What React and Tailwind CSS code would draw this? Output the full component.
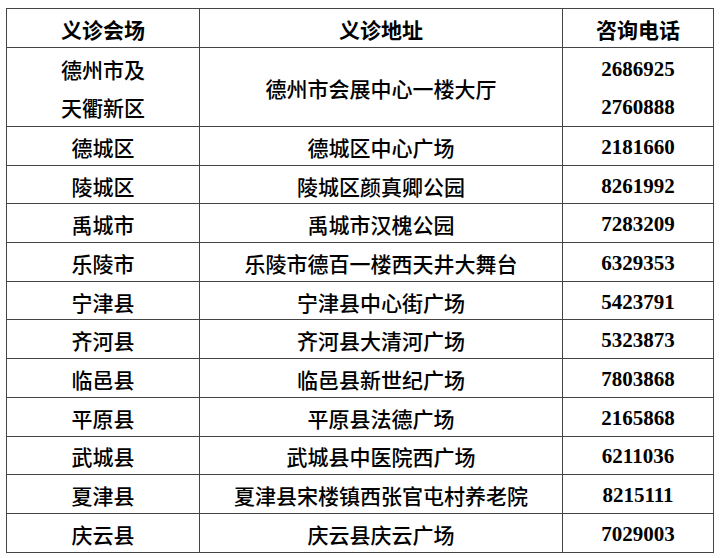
import React from "react";

const rows = [
  ["德城区", "德城区中心广场", "2181660"],
  ["陵城区", "陵城区颜真卿公园", "8261992"],
  ["禹城市", "禹城市汉槐公园", "7283209"],
  ["乐陵市", "乐陵市德百一楼西天井大舞台", "6329353"],
  ["宁津县", "宁津县中心街广场", "5423791"],
  ["齐河县", "齐河县大清河广场", "5323873"],
  ["临邑县", "临邑县新世纪广场", "7803868"],
  ["平原县", "平原县法德广场", "2165868"],
  ["武城县", "武城县中医院西广场", "6211036"],
  ["夏津县", "夏津县宋楼镇西张官屯村养老院", "8215111"],
  ["庆云县", "庆云县庆云广场", "7029003"],
];

const cjk = "font-['Noto_Sans_CJK_SC',sans-serif]";
const num = "font-['Liberation_Serif','Times_New_Roman',serif]";
const cell = "border border-[#444] text-center text-[21px] p-0 pt-[3px]";

export default function App() {
  return (
    <div className="w-[720px] h-[558px] bg-white pl-[6px] pt-[8px]">
      <table className="border-collapse w-[707px] table-fixed text-black border-[1.5px] border-[#222]">
        <colgroup>
          <col className="w-[193px]" />
          <col className="w-[363px]" />
          <col className="w-[151px]" />
        </colgroup>
        <tbody>
          <tr className="h-[39px]">
            <td className={`${cell} ${cjk} font-bold leading-none`}>义诊会场</td>
            <td className={`${cell} ${cjk} font-bold leading-none`}>义诊地址</td>
            <td className={`${cell} ${cjk} font-bold leading-none`}>咨询电话</td>
          </tr>
          <tr className="h-[78px]">
            <td className={`${cell} ${cjk} font-medium leading-[37.5px]`}>
              <div>德州市及</div>
              <div>天衢新区</div>
            </td>
            <td className={`${cell} ${cjk} font-medium leading-none`}>德州市会展中心一楼大厅</td>
            <td className={`${cell} ${num} font-bold leading-[37.5px]`}>
              <div>2686925</div>
              <div>2760888</div>
            </td>
          </tr>
          {rows.map(([a, b, c]) => (
            <tr key={a} className="h-[38.7px]">
              <td className={`${cell} ${cjk} font-medium leading-none`}>{a}</td>
              <td className={`${cell} ${cjk} font-medium leading-none`}>{b}</td>
              <td className={`${cell} ${num} font-bold leading-none`}>{c}</td>
            </tr>
          ))}
        </tbody>
      </table>
    </div>
  );
}
